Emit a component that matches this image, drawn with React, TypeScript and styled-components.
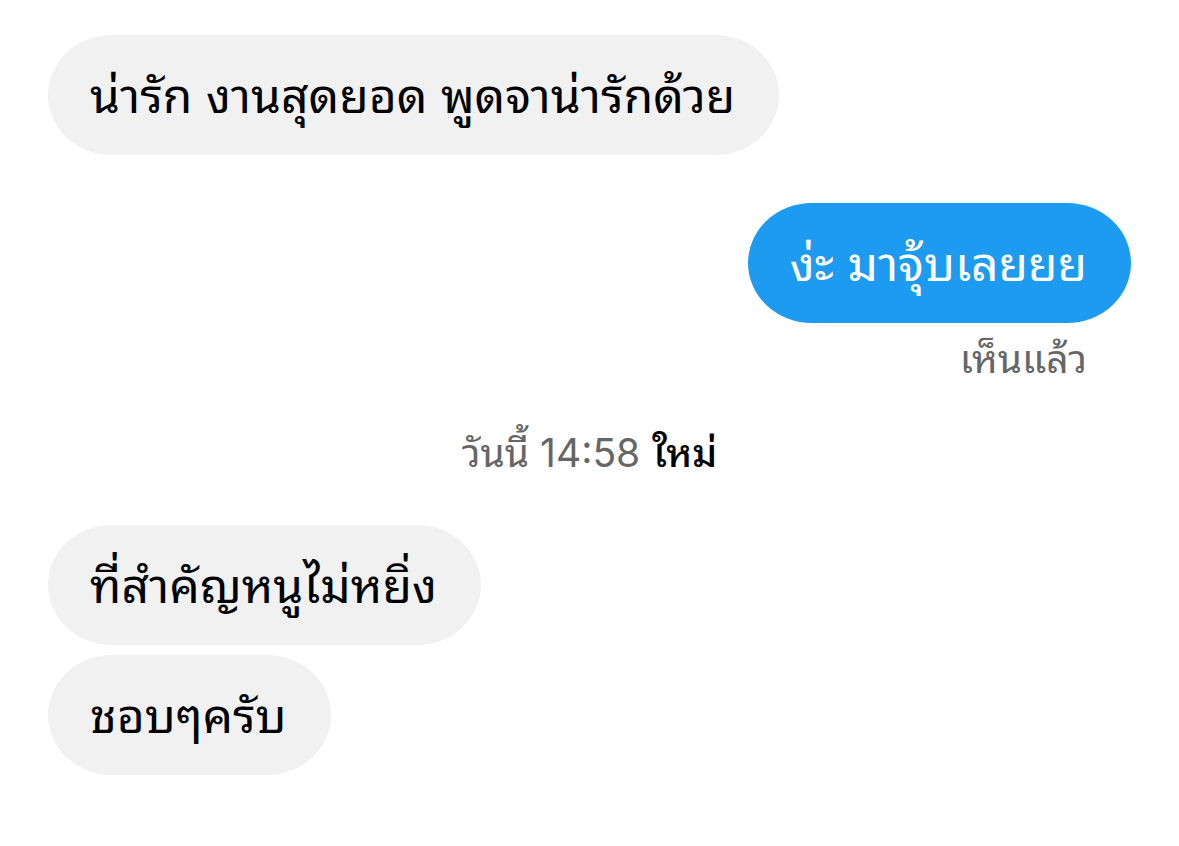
import React from "react";
import styled, { createGlobalStyle } from "styled-components";

const Global = createGlobalStyle`
  body {
    margin: 0;
    background: #fff;
    font-family: Inter, "Noto Sans Thai Looped", "Noto Looped Thai", Loma, Garuda, Waree, "Noto Sans Thai", "Noto Sans", sans-serif;
  }
`;

const Thread = styled.main`
  display: flex;
  flex-direction: column;
  padding: 35px 48px 72px;
`;

const Bubble = styled.p<{ $own?: boolean; $gap?: number }>`
  margin: ${p => p.$gap ?? 0}px 0 0;
  align-self: ${p => (p.$own ? "flex-end" : "flex-start")};
  padding: 31px 44px 29px 42px;
  border-radius: 64px / 60px;
  font-size: 48px;
  line-height: 60px;
  color: ${p => (p.$own ? "#fff" : "#000")};
  background: ${p => (p.$own ? "#1d9bf0" : "#f1f1f1")};
`;

const Receipt = styled.p`
  margin: 12px 44px 0 0;
  align-self: flex-end;
  font-size: 39px;
  line-height: 48px;
  color: #666;
`;

const Divider = styled.p`
  margin: 46px 0 0;
  text-align: center;
  font-size: 39px;
  line-height: 48px;
  color: #666;

  strong {
    margin-left: 12px;
    font-weight: 500;
    color: #000;
  }
`;

export default function App() {
  return (
    <>
      <Global />
      <Thread lang="th">
        <Bubble>น่ารัก งานสุดยอด พูดจาน่ารักด้วย</Bubble>
        <Bubble $own $gap={48}>ง่ะ มาจุ้บเลยยย</Bubble>
        <Receipt>เห็นแล้ว</Receipt>
        <Divider><time>วันนี้ 14:58</time><strong>ใหม่</strong></Divider>
        <Bubble $gap={48}>ที่สำคัญหนูไม่หยิ่ง</Bubble>
        <Bubble $gap={10}>ชอบๆครับ</Bubble>
      </Thread>
    </>
  );
}
